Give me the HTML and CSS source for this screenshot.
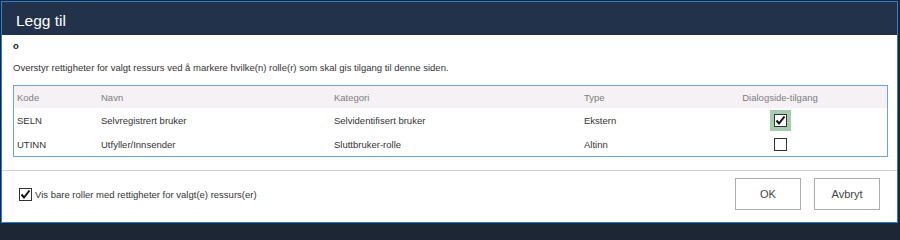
FILE: index.html
```html
<!DOCTYPE html>
<html lang="no">
<head>
<meta charset="utf-8">
<title>Legg til</title>
<link rel="stylesheet" href="styles.css">
</head>
<body>
<div class="dialog">
  <div class="header"><span class="title">Legg til</span></div>
  <div class="content">
    <div class="res">o</div>
    <div class="desc">Overstyr rettigheter for valgt ressurs ved å markere hvilke(n) rolle(r) som skal gis tilgang til denne siden.</div>
    <div class="grid">
      <table>
        <thead>
          <tr>
            <th class="c-kode">Kode</th>
            <th class="c-navn">Navn</th>
            <th class="c-kat">Kategori</th>
            <th class="c-type">Type</th>
            <th class="c-dlg">Dialogside-tilgang</th>
          </tr>
        </thead>
        <tbody>
          <tr>
            <td>SELN</td>
            <td>Selvregistrert bruker</td>
            <td>Selvidentifisert bruker</td>
            <td>Ekstern</td>
            <td class="c-dlg"><span class="focus"><span class="cb checked"><svg viewBox="0 0 13 13" width="13" height="13"><path d="M2.5 6.5 L5 9.5 L10.5 2.5" fill="none" stroke="#111" stroke-width="2"/></svg></span></span></td>
          </tr>
          <tr>
            <td>UTINN</td>
            <td>Utfyller/Innsender</td>
            <td>Sluttbruker-rolle</td>
            <td>Altinn</td>
            <td class="c-dlg"><span class="cb"></span></td>
          </tr>
        </tbody>
      </table>
    </div>
  </div>
  <div class="sep"></div>
  <div class="footer">
    <label class="filter"><span class="cb checked"><svg viewBox="0 0 13 13" width="13" height="13"><path d="M2.5 6.5 L5 9.5 L10.5 2.5" fill="none" stroke="#111" stroke-width="2"/></svg></span><span>Vis bare roller med rettigheter for valgt(e) ressurs(er)</span></label>
    <div class="buttons">
      <button class="btn">OK</button>
      <button class="btn">Avbryt</button>
    </div>
  </div>
</div>
</body>
</html>
```
FILE: styles.css
```css
html, body {
  margin: 0;
  padding: 0;
}
body {
  width: 900px;
  height: 225px;
  background: #1d2635;
  font-family: "Liberation Sans", Arial, sans-serif;
  overflow: hidden;
}
.dialog {
  margin: 1px 0 0 1px;
  width: 895px;
  height: 220px;
  border: 1px solid #2a7dd0;
  background: #ffffff;
  display: flex;
  flex-direction: column;
}
.header {
  background: #22324a;
  height: 29px;
  padding: 4px 0 0 14px;
  line-height: 29px;
  flex: none;
}
.title {
  color: #ffffff;
  font-size: 15.5px;
}
.content {
  padding: 5px 9px 0 11px;
  flex: none;
}
.res {
  font-size: 9.5px;
  font-weight: bold;
  line-height: 12px;
  height: 12px;
  color: #222;
}
.desc {
  margin-top: 10px;
  font-size: 9.5px;
  line-height: 12px;
  height: 12px;
  color: #333;
}
.grid {
  margin-top: 11px;
  border: 1px solid #6ea0da;
  height: 70px;
}
table {
  width: 100%;
  border-collapse: collapse;
  table-layout: fixed;
  font-size: 9.5px;
}
th {
  background: #f5f1f5;
  color: #7d7d7d;
  font-weight: normal;
  text-align: left;
  height: 22px;
  padding: 0 0 0 3px;
}
td {
  color: #333;
  height: 24px;
  padding: 0 0 0 3px;
}
.c-kode { width: 81px; }
.c-navn { width: 230px; }
.c-kat { width: 247px; }
.c-type { width: 89px; }
th.c-dlg, td.c-dlg {
  text-align: center;
  padding: 0;
}
.cb {
  display: inline-flex;
  width: 11px;
  height: 11px;
  border: 1px solid #333;
  background: #fff;
  vertical-align: middle;
  position: relative;
}
.cb svg {
  position: absolute;
  left: -1px;
  top: -1px;
}
.focus {
  display: inline-flex;
  align-items: center;
  justify-content: center;
  width: 21px;
  height: 21px;
  background: #a3cdae;
  vertical-align: middle;
}
.sep {
  margin-top: 13px;
  height: 1px;
  background: #d2d2d2;
  flex: none;
}
.footer {
  display: flex;
  align-items: center;
  justify-content: space-between;
  padding: 7px 17px 0 17px;
}
.filter {
  display: flex;
  align-items: center;
  gap: 3px;
  font-size: 9.5px;
  color: #333;
}
.buttons {
  display: flex;
  gap: 13px;
}
.btn {
  width: 66px;
  height: 32px;
  border: 1px solid #acacac;
  background: #fff;
  color: #444;
  font-family: "Liberation Sans", Arial, sans-serif;
  font-size: 11px;
  padding: 0;
}
```
